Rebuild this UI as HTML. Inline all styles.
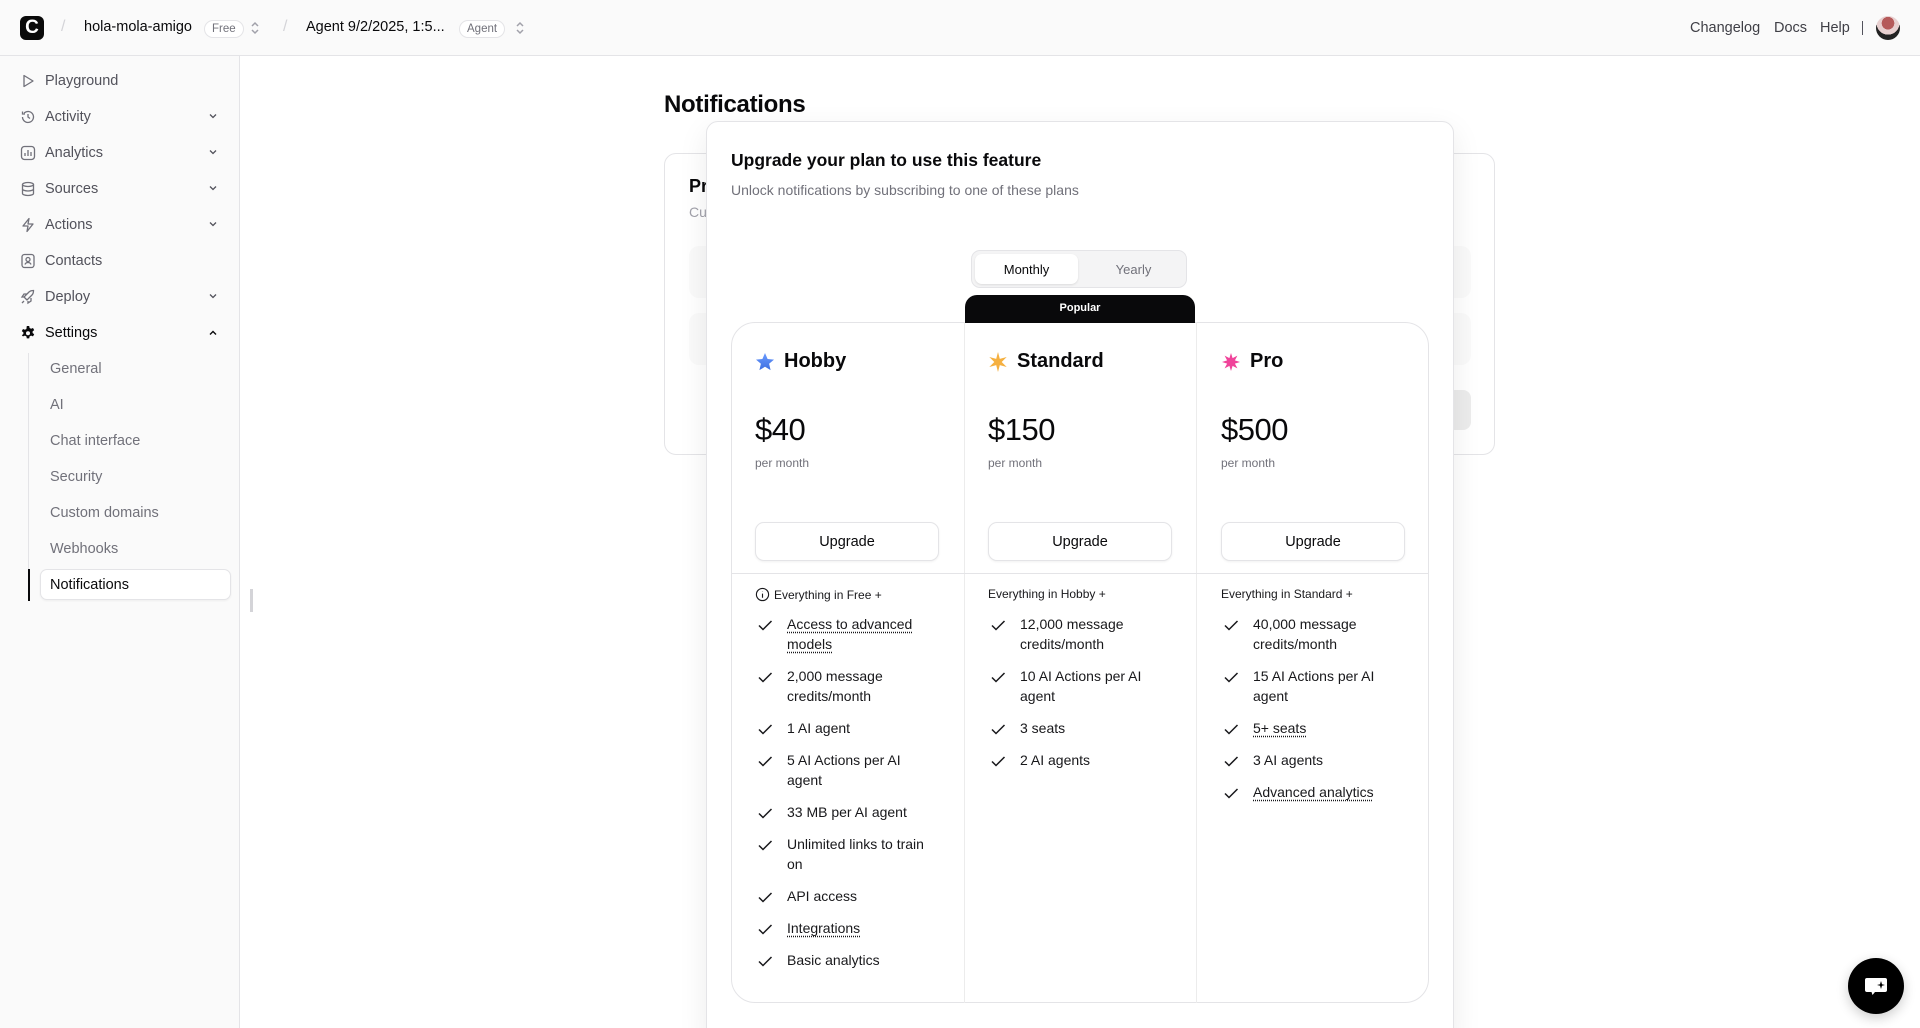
<!DOCTYPE html>
<html style="overflow:hidden"><head><meta charset="utf-8"><style>
*{box-sizing:border-box;margin:0;padding:0}
html,body{width:1920px;height:1028px;overflow:hidden}
body{font-family:"Liberation Sans",sans-serif;color:#09090b;background:#fff;position:relative}
.a{position:absolute}
.hdr{left:0;top:0;width:1920px;height:56px;background:#fafafa;border-bottom:1px solid #e4e4e7}
.side{left:0;top:56px;width:240px;height:972px;background:#fafafa;border-right:1px solid #e4e4e7}
.nav{position:absolute;left:20px;font-size:14.5px;color:#52525b;display:flex;align-items:center;height:20px}
.nav svg{width:16px;height:16px;margin-right:9px}
.chev{position:absolute;left:207px;width:12px;height:12px}
.sub{position:absolute;left:50px;font-size:14.5px;color:#71717a}
.badge{display:inline-block;border:1px solid #e4e4e7;border-radius:10px;font-size:11.5px;color:#71717a;padding:2px 7px;background:#fff}
.feat{position:absolute;font-size:14px;line-height:19.6px;color:#18181b;white-space:nowrap}
.feat .ck{position:absolute;left:-30px;top:2px;width:16px;height:16px}
.u{text-decoration:underline;text-decoration-style:dotted;text-underline-offset:3px}
.btn{position:absolute;width:184px;height:39px;border:1px solid #e4e4e7;border-radius:9px;box-shadow:0 1px 2px rgba(0,0,0,.06);font-size:14.5px;font-weight:500;display:flex;align-items:center;justify-content:center;background:#fff}
.pname{position:absolute;top:350px;font-size:20px;font-weight:600;display:flex;align-items:center}
.pname svg{width:20px;height:20px;margin-right:9px}
.price{position:absolute;top:412px;font-size:31px;font-weight:500;letter-spacing:-.5px}
.pm{position:absolute;top:456px;font-size:12px;color:#71717a}
.ev{position:absolute;top:587px;font-size:12px;font-weight:500;color:#18181b;display:flex;align-items:center}
</style></head><body>
<div class="a hdr"></div>
<div class="a" style="left:20px;top:16px;width:24px;height:24px;background:#0a0a0a;border-radius:6px;color:#fff;font-weight:700;font-size:19px;line-height:24px;text-align:center">C</div>
<div class="a" style="left:61px;top:18px;color:#d4d4d8;font-size:16px">/</div>
<div class="a" style="left:84px;top:19px;font-size:14.5px;font-weight:500">hola-mola-amigo</div>
<div class="a" style="left:204px;top:19px"><span class="badge">Free</span></div>
<svg class="a" style="left:249px;top:19px" width="12" height="18" viewBox="0 0 12 18" fill="none" stroke="#a1a1aa" stroke-width="1.5"><path d="M3 7l3-3 3 3M3 11l3 3 3-3"/></svg>
<div class="a" style="left:283px;top:18px;color:#d4d4d8;font-size:16px">/</div>
<div class="a" style="left:306px;top:19px;font-size:14.5px;font-weight:500">Agent 9/2/2025, 1:5...</div>
<div class="a" style="left:459px;top:19px"><span class="badge">Agent</span></div>
<svg class="a" style="left:514px;top:19px" width="12" height="18" viewBox="0 0 12 18" fill="none" stroke="#a1a1aa" stroke-width="1.5"><path d="M3 7l3-3 3 3M3 11l3 3 3-3"/></svg>
<div class="a" style="left:1690px;top:20px;font-size:14.5px;color:#3f3f46">Changelog</div>
<div class="a" style="left:1774px;top:20px;font-size:14.5px;color:#3f3f46">Docs</div>
<div class="a" style="left:1820px;top:20px;font-size:14.5px;color:#3f3f46">Help</div>
<div class="a" style="left:1862px;top:21px;width:1px;height:14px;background:#52525b"></div>
<div class="a" style="left:1876px;top:16px;width:24px;height:24px;border-radius:50%;background:radial-gradient(circle at 50% 30%,#b55a5a 0 30%,#e8d0d0 31% 55%,#222 56%)"></div>

<div class="a side"></div>
<div class="nav" style="top:71px"><svg viewBox="0 0 16 16" fill="none" stroke="#71717a" stroke-width="1.3"><path d="M4 2.5v11l9-5.5z" stroke-linejoin="round"/></svg>Playground</div>
<div class="nav" style="top:107px"><svg viewBox="0 0 16 16" fill="none" stroke="#71717a" stroke-width="1.3"><path d="M2.5 8a5.5 5.5 0 1 0 1.6-3.9M2.5 2.5v2.5h2.5M8 5v3l2 1.5"/></svg>Activity</div>
<div class="nav" style="top:143px"><svg viewBox="0 0 16 16" fill="none" stroke="#71717a" stroke-width="1.3"><rect x="1.5" y="1.5" width="13" height="13" rx="3"/><path d="M5 11V8M8 11V5M11 11V7"/></svg>Analytics</div>
<div class="nav" style="top:179px"><svg viewBox="0 0 16 16" fill="none" stroke="#71717a" stroke-width="1.3"><ellipse cx="8" cy="3.5" rx="5.5" ry="2"/><path d="M2.5 3.5v9c0 1.1 2.5 2 5.5 2s5.5-.9 5.5-2v-9M2.5 8c0 1.1 2.5 2 5.5 2s5.5-.9 5.5-2"/></svg>Sources</div>
<div class="nav" style="top:215px"><svg viewBox="0 0 16 16" fill="none" stroke="#71717a" stroke-width="1.3"><path d="M9 1.5L3 9h5l-1 5.5L13 7H8z" stroke-linejoin="round"/></svg>Actions</div>
<div class="nav" style="top:251px"><svg viewBox="0 0 16 16" fill="none" stroke="#71717a" stroke-width="1.3"><rect x="2" y="1.5" width="12" height="13" rx="2.5"/><circle cx="8" cy="6.5" r="2"/><path d="M5 11.5c.5-1.5 1.5-2 3-2s2.5.5 3 2"/></svg>Contacts</div>
<div class="nav" style="top:287px"><svg viewBox="0 0 16 16" fill="none" stroke="#71717a" stroke-width="1.3"><path d="M6 10L4 8l5-5c1.5-1.5 4-1.5 4.5-1.5 0 .5 0 3-1.5 4.5l-5 5zM4 8H2l2-3h3M8 12v2l3-2V9M2 14l2-2"/></svg>Deploy</div>
<div class="nav" style="top:323px;color:#09090b;font-weight:500"><svg viewBox="0 0 16 16"><path fill="#09090b" d="M6.8 1h2.4l.4 2 1.5.8 1.9-.8 1.2 2.1-1.6 1.3v1.6l1.6 1.3-1.2 2.1-1.9-.8-1.5.8-.4 2H6.8l-.4-2-1.5-.8-1.9.8L1.8 10.3l1.6-1.3V7.4L1.8 6.1 3 4l1.9.8 1.5-.8z"/><circle cx="8" cy="8.2" r="2" fill="#fafafa"/></svg>Settings</div>
<svg class="chev" style="top:110px" viewBox="0 0 12 12" fill="none" stroke="#52525b" stroke-width="1.3"><path d="M3 4.5l3 3 3-3"/></svg>
<svg class="chev" style="top:146px" viewBox="0 0 12 12" fill="none" stroke="#52525b" stroke-width="1.3"><path d="M3 4.5l3 3 3-3"/></svg>
<svg class="chev" style="top:182px" viewBox="0 0 12 12" fill="none" stroke="#52525b" stroke-width="1.3"><path d="M3 4.5l3 3 3-3"/></svg>
<svg class="chev" style="top:218px" viewBox="0 0 12 12" fill="none" stroke="#52525b" stroke-width="1.3"><path d="M3 4.5l3 3 3-3"/></svg>
<svg class="chev" style="top:290px" viewBox="0 0 12 12" fill="none" stroke="#52525b" stroke-width="1.3"><path d="M3 4.5l3 3 3-3"/></svg>
<svg class="chev" style="top:327px" viewBox="0 0 12 12" fill="none" stroke="#09090b" stroke-width="1.4"><path d="M3 7.5l3-3 3 3"/></svg>
<div class="a" style="left:28px;top:353px;width:1px;height:248px;background:#e4e4e7"></div>
<div class="a" style="left:28px;top:569px;width:2px;height:32px;background:#09090b"></div>
<div class="sub" style="top:361px">General</div>
<div class="sub" style="top:397px">AI</div>
<div class="sub" style="top:433px">Chat interface</div>
<div class="sub" style="top:469px">Security</div>
<div class="sub" style="top:505px">Custom domains</div>
<div class="sub" style="top:541px">Webhooks</div>
<div class="a" style="left:40px;top:569px;width:191px;height:31px;background:#fff;border:1px solid #e4e4e7;border-radius:7px;box-shadow:0 1px 2px rgba(0,0,0,.05)"></div>
<div class="sub" style="top:577px;color:#09090b;font-weight:500">Notifications</div>
<div class="a" style="left:250px;top:589px;width:3px;height:23px;background:#d4d4d8"></div>

<div class="a" style="left:664px;top:91px;font-size:24px;font-weight:600;letter-spacing:-.3px">Notifications</div>
<div class="a" style="left:664px;top:153px;width:831px;height:302px;border:1px solid #e4e4e7;border-radius:12px"></div>
<div class="a" style="left:689px;top:176px;font-size:18px;font-weight:600">Pr</div>
<div class="a" style="left:689px;top:204px;font-size:14px;color:#a1a1aa">Cu</div>
<div class="a" style="left:689px;top:246px;width:782px;height:52px;background:#fafafa;border-radius:10px"></div>
<div class="a" style="left:689px;top:313px;width:782px;height:52px;background:#fafafa;border-radius:10px"></div>
<div class="a" style="left:1420px;top:390px;width:51px;height:40px;background:#ececec;border-radius:8px"></div>

<div class="a" style="left:706px;top:121px;width:748px;height:920px;background:#fff;border:1px solid #e4e4e7;border-radius:12px;box-shadow:0 10px 30px rgba(0,0,0,.08)"></div>
<div class="a" style="left:731px;top:150px;font-size:17.5px;font-weight:600">Upgrade your plan to use this feature</div>
<div class="a" style="left:731px;top:182px;font-size:14px;color:#71717a">Unlock notifications by subscribing to one of these plans</div>
<div class="a" style="left:971px;top:250px;width:216px;height:38px;background:#f4f4f5;border:1px solid #e4e4e7;border-radius:9px"></div>
<div class="a" style="left:975px;top:254px;width:103px;height:30px;background:#fff;border-radius:7px;box-shadow:0 1px 2px rgba(0,0,0,.1);font-size:13px;font-weight:500;display:flex;align-items:center;justify-content:center">Monthly</div>
<div class="a" style="left:1084px;top:254px;width:99px;height:30px;font-size:13px;color:#71717a;display:flex;align-items:center;justify-content:center">Yearly</div>
<div class="a" style="left:731px;top:322px;width:698px;height:681px;border:1px solid #e4e4e7;border-radius:24px"></div>
<div class="a" style="left:965px;top:295px;width:230px;height:28px;background:#09090b;border-radius:12px 12px 0 0;color:#fff;font-size:11px;font-weight:700;text-align:center;line-height:26px">Popular</div>
<div class="a" style="left:964px;top:322px;width:1px;height:681px;background:#ececec"></div>
<div class="a" style="left:1196px;top:322px;width:1px;height:681px;background:#ececec"></div>
<div class="a" style="left:732px;top:573px;width:696px;height:1px;background:#e4e4e7"></div>

<div class="pname" style="left:755px"><svg viewBox="0 0 20 20"><defs><linearGradient id="g1" x1="0" y1="0" x2="0" y2="1"><stop offset="0" stop-color="#6b9bff"/><stop offset="1" stop-color="#3d6fe0"/></linearGradient></defs><path fill="url(#g1)" d="M10 1l2.6 6 6.4.6-4.9 4.2 1.5 6.3L10 14.8 4.4 18.1l1.5-6.3L1 7.6l6.4-.6z"/></svg>Hobby</div>
<div class="pname" style="left:988px"><svg viewBox="0 0 20 20"><path fill="#f5b040" d="M10 0l1.8 6.9L18.7 5l-5 5 5 5-6.9-1.9L10 20l-1.8-6.9L1.3 15l5-5-5-5 6.9 1.9z"/></svg>Standard</div>
<div class="pname" style="left:1221px"><svg viewBox="0 0 20 20"><path fill="#f0439a" d="M10 1l1.6 5.1 4.8-2.5-2.5 4.8L19 10l-5.1 1.6 2.5 4.8-4.8-2.5L10 19l-1.6-5.1-4.8 2.5 2.5-4.8L1 10l5.1-1.6-2.5-4.8 4.8 2.5z"/></svg>Pro</div>
<div class="price" style="left:755px">$40</div>
<div class="price" style="left:988px">$150</div>
<div class="price" style="left:1221px">$500</div>
<div class="pm" style="left:755px">per month</div>
<div class="pm" style="left:988px">per month</div>
<div class="pm" style="left:1221px">per month</div>
<div class="btn" style="left:755px;top:522px">Upgrade</div>
<div class="btn" style="left:988px;top:522px">Upgrade</div>
<div class="btn" style="left:1221px;top:522px">Upgrade</div>

<div class="ev" style="left:755px"><svg width="15" height="15" viewBox="0 0 16 16" fill="none" stroke="#18181b" stroke-width="1.2" style="margin-right:4px"><circle cx="8" cy="8" r="6.5"/><path d="M8 7v4.5M8 4.6v.3"/></svg>Everything in Free +</div>
<div class="ev" style="left:988px">Everything in Hobby +</div>
<div class="ev" style="left:1221px">Everything in Standard +</div>

<svg width="0" height="0" style="position:absolute"><defs><path id="ck" d="M2 8.5l4 4L14.5 4" fill="none" stroke="#18181b" stroke-width="1.5"/></defs></svg>
<div class="feat" style="left:787px;top:615px"><svg class="ck"><use href="#ck"/></svg><span class="u">Access to advanced</span><br><span class="u">models</span></div>
<div class="feat" style="left:787px;top:667px"><svg class="ck"><use href="#ck"/></svg>2,000 message<br>credits/month</div>
<div class="feat" style="left:787px;top:719px"><svg class="ck"><use href="#ck"/></svg>1 AI agent</div>
<div class="feat" style="left:787px;top:751px"><svg class="ck"><use href="#ck"/></svg>5 AI Actions per AI<br>agent</div>
<div class="feat" style="left:787px;top:803px"><svg class="ck"><use href="#ck"/></svg>33 MB per AI agent</div>
<div class="feat" style="left:787px;top:835px"><svg class="ck"><use href="#ck"/></svg>Unlimited links to train<br>on</div>
<div class="feat" style="left:787px;top:887px"><svg class="ck"><use href="#ck"/></svg>API access</div>
<div class="feat" style="left:787px;top:919px"><svg class="ck"><use href="#ck"/></svg><span class="u">Integrations</span></div>
<div class="feat" style="left:787px;top:951px"><svg class="ck"><use href="#ck"/></svg>Basic analytics</div>

<div class="feat" style="left:1020px;top:615px"><svg class="ck"><use href="#ck"/></svg>12,000 message<br>credits/month</div>
<div class="feat" style="left:1020px;top:667px"><svg class="ck"><use href="#ck"/></svg>10 AI Actions per AI<br>agent</div>
<div class="feat" style="left:1020px;top:719px"><svg class="ck"><use href="#ck"/></svg>3 seats</div>
<div class="feat" style="left:1020px;top:751px"><svg class="ck"><use href="#ck"/></svg>2 AI agents</div>

<div class="feat" style="left:1253px;top:615px"><svg class="ck"><use href="#ck"/></svg>40,000 message<br>credits/month</div>
<div class="feat" style="left:1253px;top:667px"><svg class="ck"><use href="#ck"/></svg>15 AI Actions per AI<br>agent</div>
<div class="feat" style="left:1253px;top:719px"><svg class="ck"><use href="#ck"/></svg><span class="u">5+ seats</span></div>
<div class="feat" style="left:1253px;top:751px"><svg class="ck"><use href="#ck"/></svg>3 AI agents</div>
<div class="feat" style="left:1253px;top:783px"><svg class="ck"><use href="#ck"/></svg><span class="u">Advanced analytics</span></div>

<div class="a" style="left:1848px;top:958px;width:56px;height:56px;border-radius:50%;background:#000;box-shadow:0 4px 12px rgba(0,0,0,.2)"></div>
<svg class="a" style="left:1862px;top:972px" width="28" height="28" viewBox="0 0 28 28"><path fill="#fff" d="M5 6h18a2 2 0 0 1 2 2v10a2 2 0 0 1-2 2H13l-2.5 3-1-3H5a2 2 0 0 1-2-2V8a2 2 0 0 1 2-2z"/><path fill="#000" d="M19 9l1 3.2 3 .8-3 .8-1 3.2-1-3.2-3-.8 3-.8z"/></svg>
</body></html>
